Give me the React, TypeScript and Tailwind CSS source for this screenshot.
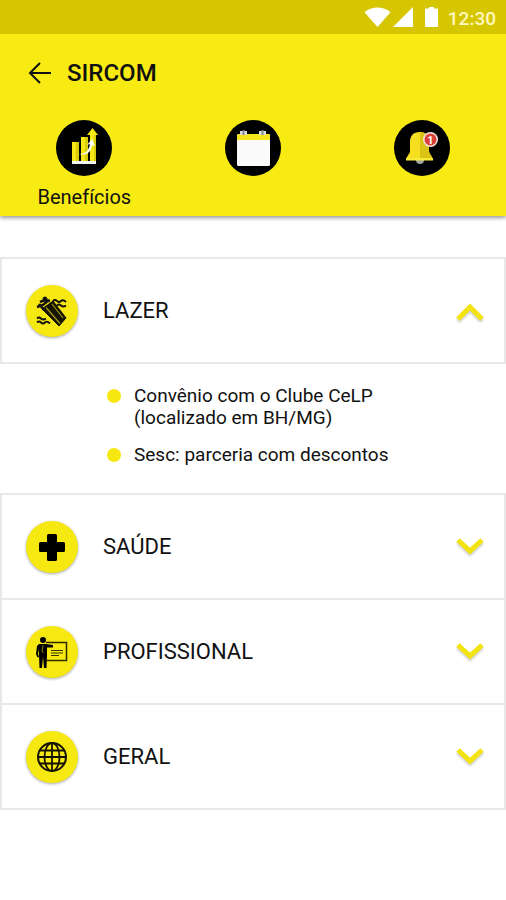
import { useState, type ReactNode } from "react";

function StatusBar() {
  return (
    <div className="flex h-[34px] items-center justify-end bg-[#d5c600] px-2.5 text-white">
      <svg className="mr-0.5 h-5 w-[27px]" viewBox="0 0 27 20" fill="currentColor" aria-hidden="true">
        <path d="M0.500 5.200C8 -1 19 -1 26.500 5.200L13.500 20Z" />
      </svg>
      <svg className="mr-3 h-5 w-5" viewBox="0 0 20 20" fill="currentColor" aria-hidden="true">
        <path d="M20 0V20H0Z" />
      </svg>
      <svg className="mr-2.5 h-5 w-[13px]" viewBox="0 0 13 20" fill="currentColor" aria-hidden="true">
        <path d="M4 0h5v1.500h3q1 0 1 1V19q0 1-1 1H1q-1 0-1-1V2.500q0-1 1-1h3z" />
      </svg>
      <span className="pt-1 text-[19px] leading-6 font-medium text-[#fff8c0]">12:30</span>
    </div>
  );
}

function ChartIcon() {
  return (
    <svg className="size-14" viewBox="0 0 56 56" aria-hidden="true">
      <circle cx="28" cy="28" r="28" fill="#000" />
      <path d="M16 22h7v19h-7zM25 17h7v24h-7zM34 14h6v27h-6z" fill="#d9cc08" />
      <path d="M16 22h4v19h-4zM25 17h4v24h-4zM34 14h4v27h-4z" fill="#f5e616" />
      <path d="M36.500 8l5.500 7h-11z" fill="#f8e911" />
      <path d="M23 34c7 0 10-4 11-10l-3 1 5-6 3 7-3-1c-1 7-5 11-13 9z" fill="#fff" />
      <path d="M16 41h24v3H16z" fill="#f5f5f5" />
    </svg>
  );
}

function CalendarIcon() {
  return (
    <svg className="size-14" viewBox="0 0 56 56" aria-hidden="true">
      <circle cx="28" cy="28" r="28" fill="#000" />
      <rect x="12" y="14" width="33" height="32" rx="1.500" fill="#fafafa" />
      <path d="M12 20v-4.500q0-1.500 1.500-1.500h30q1.500 0 1.500 1.500V20z" fill="#f5e51b" />
      <path d="M15 11h7v4h-7zM34 11h7v4h-7z" fill="#ddd" />
      <path d="M17.500 10h2v5h-2zM36.500 10h2v5h-2z" fill="#888" />
    </svg>
  );
}

function BellIcon() {
  return (
    <svg className="size-14" viewBox="0 0 56 56" aria-hidden="true">
      <circle cx="28" cy="28" r="28" fill="#000" />
      <circle cx="26" cy="40" r="4" fill="#9fa5a3" />
      <path d="M26 12c-7 0-10 4-10 10v9c0 3-3 4-4 9h27c-1-5-4-6-4-9v-9c0-6-3-10-9-10z" fill="#f5df20" />
      <path d="M26 12c6 0 9 4 9 10v9c0 3 3 4 4 9H26z" fill="#d9c416" />
      <path d="M12 38h27v2.500H12z" fill="#fae936" />
      <circle cx="36.500" cy="19.500" r="7.500" fill="#f5e5df" />
      <circle cx="36.500" cy="19.500" r="6" fill="#da4038" />
      <text x="36.500" y="23.500" textAnchor="middle" fontSize="11" fontWeight="700" fill="#fff">
        1
      </text>
    </svg>
  );
}

function PoolIcon() {
  return (
    <svg className="size-[52px]" viewBox="0 0 52 52" fill="none" stroke="#111" aria-hidden="true">
      <path d="M16 24l11-8 13 17-7 8z" fill="#171500" strokeWidth="1" />
      <path d="M20 22.500l14 16M26 19l11 14" stroke="#a3980b" strokeWidth="1.200" />
      <path d="M11 22l6-2 6-5M14 17l5-2 5 1M13 19l5 6" strokeWidth="2.500" />
      <circle cx="19" cy="14" r="2" fill="#111" />
      <path
        d="M27 16q2-2 4 0t4 0 5 1M31 20.500q2-2 4 0t5 0M11 33.500q2-2 4 0t5 0M11 37.500q2-2 4 0t4 0 5 1"
        strokeWidth="1.800"
      />
    </svg>
  );
}

function CrossIcon() {
  return (
    <svg className="size-[52px]" viewBox="0 0 52 52" aria-hidden="true">
      <path d="M22.500 13h7q1.500 0 1.500 1.500V21h6.500q1.500 0 1.500 1.500v7q0 1.500-1.500 1.500H31v7.500q0 1.500-1.500 1.500h-7q-1.500 0-1.500-1.500V31h-6.500q-1.500 0-1.500-1.500v-7q0-1.500 1.500-1.500H21v-6.500q0-1.500 1.500-1.500z" />
    </svg>
  );
}

function PresenterIcon() {
  return (
    <svg className="size-[52px]" viewBox="0 0 52 52" aria-hidden="true">
      <path d="M20 16.500h20.500v18H21" fill="none" stroke="#2d2a00" strokeWidth="1.500" />
      <path d="M25 24.500h12M25 27h12M25 29.500h8" stroke="#3b3700" strokeWidth="1.200" />
      <circle cx="17" cy="14" r="3" />
      <path d="M13 18h7l7 1v2.500h-6V29l-.5 13H18l-1-11-1 11h-2.500L13 30v-7l-1 5 1 3-1.500.5L10 28l1-8z" />
      <path d="M17 19l-1 6 1.500 2" stroke="#b5aa0b" strokeWidth=".8" fill="none" />
    </svg>
  );
}

function GlobeIcon() {
  return (
    <svg className="size-[52px]" viewBox="0 0 52 52" fill="none" stroke="#151300" strokeWidth="1.800" aria-hidden="true">
      <circle cx="26" cy="26" r="14" strokeWidth="2" />
      <ellipse cx="26" cy="26" rx="7.500" ry="14" />
      <path d="M26 12v28M12 26h28M14 19.500h24M14 32.500h24" />
    </svg>
  );
}

type Section = { id: string; title: string; icon: ReactNode; items: string[] };

const sections: Section[] = [
  {
    id: "lazer",
    title: "LAZER",
    icon: <PoolIcon />,
    items: ["Convênio com o Clube CeLP (localizado em BH/MG)", "Sesc: parceria com descontos"],
  },
  { id: "saude", title: "SAÚDE", icon: <CrossIcon />, items: [] },
  { id: "profissional", title: "PROFISSIONAL", icon: <PresenterIcon />, items: [] },
  { id: "geral", title: "GERAL", icon: <GlobeIcon />, items: [] },
];

function Chevron({ open }: { open: boolean }) {
  return (
    <svg
      className="h-5 w-7 shrink-0 drop-shadow-[0_2px_1px_rgba(0,0,0,0.2)]"
      viewBox="0 0 28 20"
      fill="none"
      stroke="#f3e411"
      strokeWidth="5"
      aria-hidden="true"
    >
      <path d={open ? "M2 18L14 6l12 12" : "M2 3l12 11L26 3"} />
    </svg>
  );
}

export default function App() {
  const [openId, setOpenId] = useState("lazer");

  return (
    <div className="min-h-screen bg-white font-['Roboto',sans-serif] text-[#111]">
      <header className="bg-[#f8ea13] shadow-[0_2px_4px_rgba(0,0,0,0.4)]">
        <StatusBar />
        <div className="flex h-[78px] items-center gap-4 px-7">
          <button type="button" aria-label="Voltar" className="cursor-pointer">
            <svg className="h-[22px] w-[23px]" viewBox="0 0 23 22" fill="none" stroke="#111" strokeWidth="2" aria-hidden="true">
              <path d="M23 11H2M12 1L2 11l10 10" />
            </svg>
          </button>
          <h1 className="text-2xl font-medium">SIRCOM</h1>
        </div>
        <nav className="grid h-[104px] grid-cols-3 items-start pt-2">
          <button type="button" className="flex cursor-pointer flex-col items-center gap-[9px]">
            <ChartIcon />
            <span className="text-xl leading-6">Benefícios</span>
          </button>
          <button type="button" aria-label="Agenda" className="flex cursor-pointer justify-center">
            <CalendarIcon />
          </button>
          <button type="button" aria-label="Notificações" className="flex cursor-pointer justify-center">
            <BellIcon />
          </button>
        </nav>
      </header>

      <main className="pt-[41px] pb-10">
        {sections.map((section, index) => {
          const open = section.id === openId;
          const joined = index > 0 && sections[index - 1].id !== openId;
          return (
            <section key={section.id} className={joined ? "-mt-0.5" : ""}>
              <h2>
                <button
                  type="button"
                  aria-expanded={open}
                  onClick={() => setOpenId(open ? "" : section.id)}
                  className="flex h-[107px] w-full cursor-pointer items-center border-2 border-[#e8e8e8] pr-5 pl-6 text-left"
                >
                  <span className="mr-[25px] shrink-0 rounded-full bg-[#f6e811] shadow-[0_1px_3px_rgba(0,0,0,0.35)]">
                    {section.icon}
                  </span>
                  <span className="flex-1 text-[22px] leading-7">{section.title}</span>
                  <Chevron open={open} />
                </button>
              </h2>
              {open && (
                <ul className="space-y-[15px] pt-[21px] pr-6 pb-[27px] pl-[107px] text-[19px] leading-[22px]">
                  {section.items.map((item) => (
                    <li key={item} className="flex items-start gap-[13px]">
                      <span className="mt-1 size-3.5 shrink-0 rounded-full bg-[#f5e70f]" />
                      <span className="max-w-[280px]">{item}</span>
                    </li>
                  ))}
                </ul>
              )}
            </section>
          );
        })}
      </main>
    </div>
  );
}
